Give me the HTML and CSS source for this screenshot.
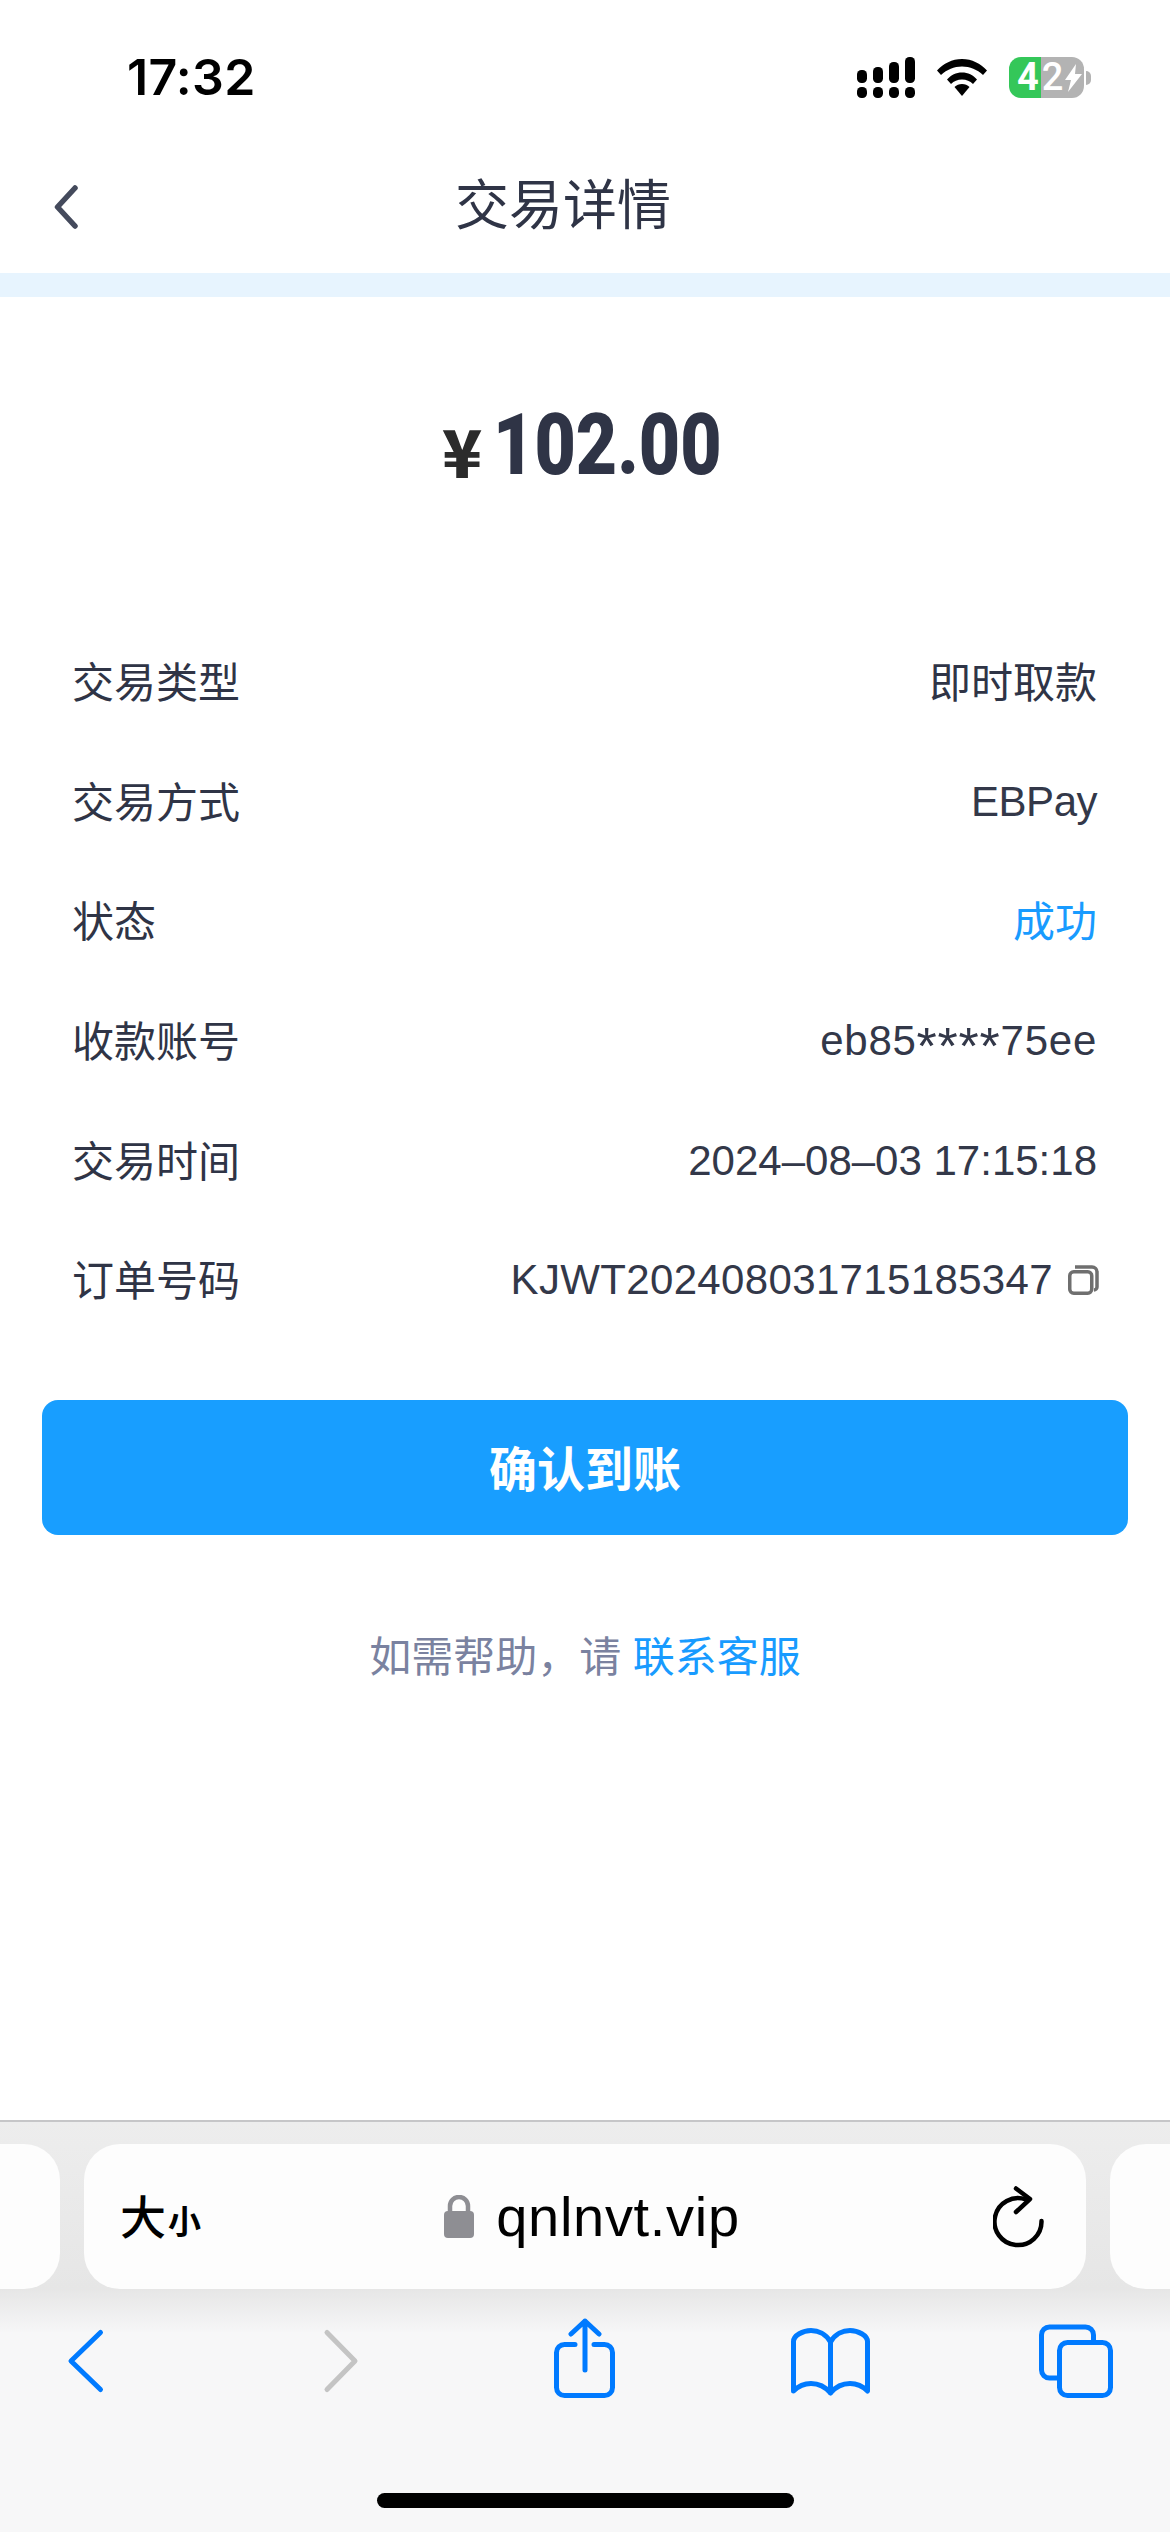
FILE: index.html
```html
<!DOCTYPE html>
<html lang="zh">
<head>
<meta charset="UTF-8">
<title>交易详情</title>
<link rel="stylesheet" href="styles.css">
</head>
<body>
<div class="phone">

  <!-- status bar -->
  <div class="status">
    <span class="clock">17:32</span>
    <div class="status-icons">
      <svg class="signal" width="58" height="41" viewBox="0 0 58 41" fill="#000">
        <rect x="0" y="13" width="10" height="13" rx="4.5"/>
        <rect x="16" y="10" width="10" height="16" rx="4.5"/>
        <rect x="32" y="5" width="10" height="21" rx="4.5"/>
        <rect x="48" y="0" width="10" height="26" rx="4.5"/>
        <rect x="0" y="30" width="10" height="11" rx="4.5"/>
        <rect x="16" y="30" width="10" height="11" rx="4.5"/>
        <rect x="32" y="30" width="10" height="11" rx="4.5"/>
        <rect x="48" y="30" width="10" height="11" rx="4.5"/>
      </svg>
      <svg class="wifi" width="50" height="37" viewBox="0 0 50 37" fill="#000">
        <path d="M0 11.5C6.500 4.500 15 0 25 0s18.500 4.500 25 11.500l-4 4.500C40 10.500 33 7.500 25 7.500S10 10.500 4 16z"/>
        <path d="M10 20.500C14 16 19 13.500 25 13.500s11 2.500 15 7l-4 4.500C33 22 29.500 20.500 25 20.500S17 22 14 25z"/>
        <path d="M17.500 28c2-2 4.500-3 7.500-3s5.500 1 7.500 3L25 37z"/>
      </svg>
      <div class="battery">
        <div class="battery-body">
          <span class="battery-level">4</span><span class="battery-rest">2</span>
          <svg class="bolt" width="17" height="28" viewBox="0 0 17 28" fill="#fff">
            <path d="M11 0L0 16h6L3 28l14-18h-7z"/>
          </svg>
        </div>
        <div class="battery-nub"></div>
      </div>
    </div>
  </div>

  <!-- page header -->
  <div class="nav">
    <svg class="nav-back" width="24" height="44" viewBox="0 0 24 44" fill="none" stroke="#444a5c" stroke-width="5.500" stroke-linecap="round" stroke-linejoin="round">
      <path d="M21 3L3.500 22 21 41"/>
    </svg>
    <span class="nav-title">交易详情</span>
  </div>
  <div class="band"></div>

  <div class="amount">
    <span class="yen">¥</span><span class="money"><span class="money-num">102.00</span></span>
  </div>

  <div class="list">
    <div class="row"><span>交易类型</span><span>即时取款</span></div>
    <div class="row"><span>交易方式</span><span class="num pay">EBPay</span></div>
    <div class="row"><span>状态</span><span class="ok">成功</span></div>
    <div class="row"><span>收款账号</span><span class="num account">eb85<span class="mask">****</span>75ee</span></div>
    <div class="row"><span>交易时间</span><span class="num">2024–08–03 17:15:18</span></div>
    <div class="row">
      <span>订单号码</span>
      <span class="num order">KJWT202408031715185347
        <svg class="copy" width="31" height="30" viewBox="0 0 31 30" fill="none" stroke="#6f6f6f" stroke-width="3.500">
          <rect x="1.750" y="6.750" width="22" height="21.500" rx="4"/>
          <path d="M7 2h17a5 5 0 0 1 5 5v15a3 3 0 0 1-3 3"/>
        </svg>
      </span>
    </div>
  </div>

  <button class="confirm">确认到账</button>
  <p class="help">如需帮助，请 <a class="help-link">联系客服</a></p>

  <!-- browser bar -->
  <div class="browser">
    <div class="tabs">
      <div class="tab-side tab-left"></div>
      <div class="address">
        <span class="aa"><b>大</b><i>小</i></span>
        <div class="url">
          <svg class="lock" width="30" height="43" viewBox="0 0 30 43">
            <path d="M6 17v-6a9 9 0 0 1 18 0v6" fill="none" stroke="#8e8e93" stroke-width="4.500"/>
            <rect x="0" y="16" width="30" height="27" rx="4" fill="#8e8e93"/>
          </svg>
          <span>qnlnvt.vip</span>
        </div>
        <svg class="reload" width="52" height="62" viewBox="0 0 52 62" fill="none" stroke="#000" stroke-width="4.500" stroke-linecap="round" stroke-linejoin="round">
          <path d="M48.500 35A23.500 23.500 0 1 1 33 13.500"/>
          <path d="M23 2.500L37 13L23 26"/>
        </svg>
      </div>
      <div class="tab-side tab-right"></div>
    </div>
    <div class="tools">
      <svg class="tool" viewBox="0 0 120 80" stroke="#007aff">
        <path d="M75.500 14.500L46 43l29.500 28.500"/>
      </svg>
      <svg class="tool" viewBox="0 0 120 80" stroke="#c4c4c4">
        <path d="M54 14.500L82 43 54 71.500"/>
      </svg>
      <svg class="tool" viewBox="0 0 120 80" stroke="#007aff">
        <path d="M54 26.500H43.500a8 8 0 0 0-8 8v35a8 8 0 0 0 8 8h40a8 8 0 0 0 8-8v-35a8 8 0 0 0-8-8H73"/>
        <path d="M64 52V3M50 16L64 3l14 13"/>
      </svg>
      <svg class="tool" viewBox="0 0 120 80" stroke="#007aff">
        <path d="M62.500 24C58 16 50 12.500 43 12.500c-8 0-17.500 5-17.500 11V73c5-5 11-7.500 17.500-7.500 8 0 14.500 3.500 19.500 9.500 5-6 11.500-9.500 19.500-9.500 6.500 0 12.500 2.500 17.500 7.500V23.500c0-6-9.500-11-17.500-11-7 0-15 3.500-19.500 11.500zM62.500 24v51"/>
      </svg>
      <svg class="tool" viewBox="0 0 120 80" stroke="#007aff">
        <path d="M77.500 22v-5a8 8 0 0 0-8-8h-36a8 8 0 0 0-8 8v35a8 8 0 0 0 8 8H41"/>
        <rect x="43.500" y="24.500" width="51" height="53" rx="8"/>
      </svg>
    </div>
    <div class="home-bar"></div>
  </div>
</div>
</body>
</html>
```

FILE: styles.css
```css
* {
  box-sizing: border-box;
}

body {
  margin: 0;
  background: #fff;
  font-family: "Liberation Sans", "Noto Sans CJK SC", sans-serif;
  color: #2f3446;
}

.phone {
  width: 1170px;
  height: 2532px;
  display: flex;
  flex-direction: column;
  overflow: hidden;
}

/* status bar */
.status {
  height: 155px;
  padding: 57px 79px 0 127px;
  display: flex;
  justify-content: space-between;
  align-items: flex-start;
}

.clock {
  font-family: "Inter", sans-serif;
  font-size: 50px;
  font-weight: 600;
  line-height: 40px;
  letter-spacing: .3px;
  color: #000;
}

.status-icons {
  display: flex;
  align-items: flex-start;
  gap: 22px;
}

.wifi {
  margin-top: 2px;
}

.battery {
  display: flex;
  align-items: center;
  gap: 2px;
}

.battery-body {
  width: 75px;
  height: 41px;
  border-radius: 12px;
  background: linear-gradient(90deg, #34c759 32px, #b3b3b3 32px);
  display: flex;
  align-items: center;
  padding-left: 8px;
  font-family: "Roboto", sans-serif;
  font-size: 38px;
  font-weight: 700;
  line-height: 41px;
  color: #fff;
}

.battery-rest {
  margin-left: 3px;
  font-weight: 500;
}

.bolt {
  margin-left: 2px;
}

.battery-nub {
  width: 5px;
  height: 14px;
  border-radius: 0 7px 7px 0;
  background: #b3b3b3;
}

/* header */
.nav {
  height: 118px;
  position: relative;
  display: flex;
  align-items: center;
  justify-content: center;
}

.nav-back {
  position: absolute;
  left: 54px;
  top: 30px;
}

.nav-title {
  font-family: "Noto Sans CJK SC", sans-serif;
  font-size: 54px;
  line-height: 70px;
  margin-right: 44px;
  margin-top: -24px;
}

.band {
  height: 24px;
  background: #e7f4fe;
}

.amount {
  height: 324px;
  padding: 0 4px 28px 0;
  display: flex;
  align-items: center;
  justify-content: center;
}

.yen {
  font-family: "Noto Sans CJK SC", sans-serif;
  font-size: 66px;
  font-weight: 900;
  line-height: 62px;
  color: #2b2b2b;
  margin: 8px 11px 0 0;
}

/* no condensed face is available, so the digits get squeezed */
.money {
  width: 231px;
  height: 90px;
}

.money-num {
  display: inline-block;
  font-family: "Roboto", sans-serif;
  font-size: 85px;
  font-weight: 900;
  line-height: 90px;
  white-space: nowrap;
  transform: scaleX(.84);
  transform-origin: left center;
}

/* detail rows */
.list {
  padding: 0 73px 0 72px;
}

.row {
  height: 119.700px;
  display: flex;
  justify-content: space-between;
  align-items: center;
  font-size: 42px;
}

.row > span {
  margin-top: -3px;
}

.row > .num {
  margin-top: 2px;
  color: #333849;
}

.pay {
  letter-spacing: -.5px;
}

.account {
  letter-spacing: .75px;
}

/* the masked digits sit high and wide */
.mask {
  font-size: 52px;
  line-height: 0;
  vertical-align: -9px;
}

.ok {
  color: #189bff;
}

.order {
  display: flex;
  align-items: center;
  gap: 15px;
  margin-right: -2px;
  letter-spacing: .35px;
}

.confirm {
  display: block;
  width: 1086px;
  height: 135px;
  margin: 61px 0 0 42px;
  border: none;
  border-radius: 16px;
  background: #189eff;
  color: #fff;
  font-family: "Noto Sans CJK SC", sans-serif;
  font-size: 48px;
  font-weight: 700;
  padding-bottom: 4px;
}

.help {
  margin: 94px 0 0;
  text-align: center;
  font-size: 42px;
  line-height: 58px;
  color: #7a82a0;
}

.help-link {
  color: #189bff;
}

/* browser bar */
.browser {
  margin-top: auto;
  height: 412px;
  border-top: 2px solid #c6c6c8;
  background: #f7f7f8;
}

.tabs {
  padding-top: 22px;
  height: 210px;
  display: flex;
  gap: 24px;
  background: linear-gradient(#ededed, #e6e6e6 167px, #f6f6f7);
}

.tab-side {
  width: 60px;
  height: 145px;
  background: #fdfdfd;
}

.tab-left {
  border-radius: 0 36px 36px 0;
}

.tab-right {
  border-radius: 36px 0 0 36px;
}

.address {
  flex: 1;
  height: 145px;
  border-radius: 36px;
  background: #fdfdfd;
  display: flex;
  align-items: center;
  padding: 0 41px 0 36px;
  justify-content: space-between;
  color: #000;
}

.aa {
  font-family: "Noto Sans CJK SC", sans-serif;
  display: flex;
  align-items: baseline;
  line-height: 60px;
}

.aa b {
  font-size: 46px;
  font-weight: 500;
}

.aa i {
  font-size: 33px;
  font-style: normal;
  font-weight: 700;
  margin-left: 2px;
}

.url {
  display: flex;
  align-items: center;
  gap: 22px;
  font-size: 56px;
  letter-spacing: .7px;
  margin-right: 10px;
}

.tools {
  padding: 0 34px 0 25px;
  margin-top: -14px;
  display: flex;
  justify-content: space-between;
}

.tool {
  width: 120px;
  height: 80px;
  fill: none;
  stroke-width: 5;
  stroke-linecap: round;
  stroke-linejoin: round;
}

.home-bar {
  width: 417px;
  height: 15px;
  margin: 95px 0 0 377px;
  border-radius: 8px;
  background: #000;
}
```
